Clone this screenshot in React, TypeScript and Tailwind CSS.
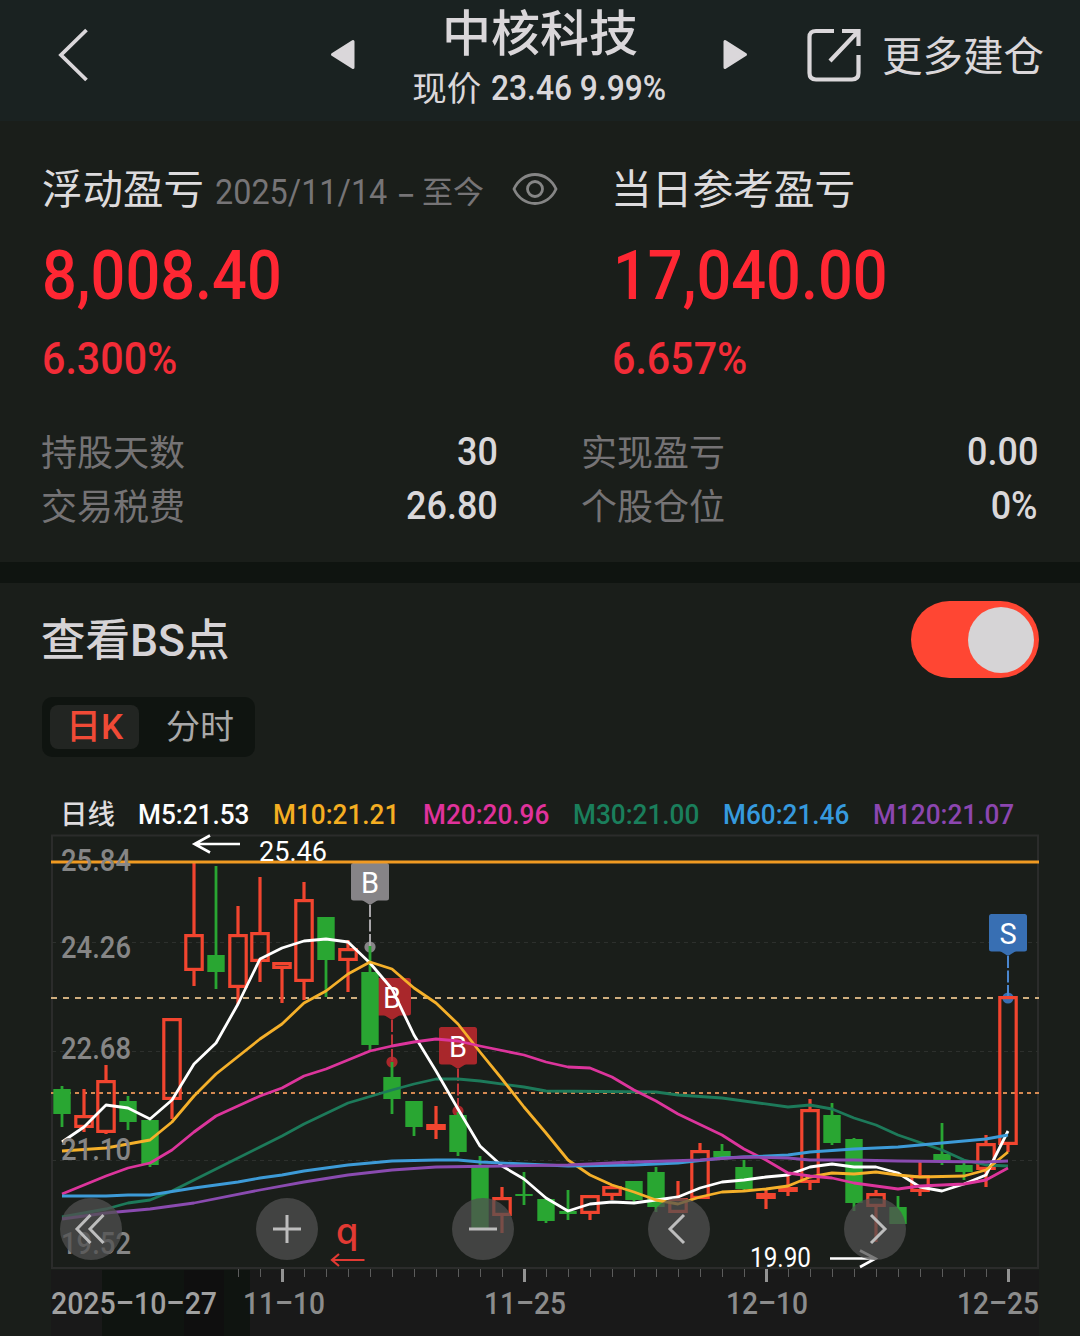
import type { ReactNode } from "react";

type Candle = [high: number, top: number, bottom: number, low: number, kind: "u" | "d"];

const STEP = 22;
const FIRST_X = 62;

const candles: Candle[] = [
  [1086, 1089, 1114, 1127, "d"],
  [1089, 1115, 1128, 1132, "u"],
  [1065, 1080, 1133, 1134, "u"],
  [1096, 1101, 1122, 1130, "d"],
  [1120, 1120, 1165, 1167, "d"],
  [1018, 1018, 1100, 1119, "u"],
  [862, 934, 971, 986, "u"],
  [866, 955, 972, 989, "d"],
  [906, 934, 988, 1004, "u"],
  [877, 932, 962, 982, "u"],
  [962, 962, 969, 1003, "u"],
  [882, 899, 982, 1000, "u"],
  [917, 917, 960, 997, "d"],
  [940, 948, 961, 992, "u"],
  [946, 972, 1045, 1051, "d"],
  [1062, 1077, 1099, 1114, "d"],
  [1101, 1101, 1127, 1136, "d"],
  [1106, 1124, 1130, 1139, "u"],
  [1112, 1115, 1152, 1156, "d"],
  [1156, 1167, 1229, 1229, "d"],
  [1187, 1197, 1216, 1233, "u"],
  [1172, 1194, 1196, 1205, "d"],
  [1199, 1199, 1221, 1223, "d"],
  [1190, 1211, 1214, 1220, "d"],
  [1195, 1195, 1214, 1220, "u"],
  [1185, 1186, 1196, 1200, "u"],
  [1181, 1181, 1200, 1202, "d"],
  [1167, 1172, 1207, 1212, "d"],
  [1181, 1198, 1213, 1213, "u"],
  [1143, 1150, 1199, 1199, "u"],
  [1144, 1151, 1157, 1160, "d"],
  [1160, 1167, 1189, 1190, "d"],
  [1190, 1193, 1199, 1209, "u"],
  [1176, 1187, 1192, 1196, "u"],
  [1099, 1109, 1183, 1190, "u"],
  [1103, 1115, 1143, 1145, "d"],
  [1138, 1139, 1203, 1211, "d"],
  [1190, 1193, 1207, 1242, "u"],
  [1196, 1207, 1224, 1224, "d"],
  [1162, 1175, 1192, 1196, "u"],
  [1123, 1154, 1160, 1165, "d"],
  [1163, 1165, 1172, 1180, "d"],
  [1135, 1143, 1170, 1187, "u"],
  [996, 996, 1145, 1152, "u"],
];

const lines = [
  {
    color: "#1d7a5a",
    points:
      "62,1217 106,1209 128,1203 150,1200 172,1191 194,1180 216,1169 260,1147 282,1136 304,1124 348,1103 392,1090 414,1084 436,1079 458,1079 480,1081 524,1087 546,1091 656,1092 678,1095 722,1098 788,1107 810,1105 832,1109 854,1118 876,1125 898,1135 942,1150 964,1160 986,1165 1008,1166",
  },
  {
    color: "#ffffff",
    points:
      "62,1142 84,1127 106,1105 128,1108 150,1119 172,1100 194,1064 216,1043 238,1004 260,959 282,948 304,941 326,939 348,942 370,963 392,989 414,1035 436,1071 458,1109 480,1146 502,1166 524,1179 546,1198 568,1211 590,1204 612,1202 634,1203 656,1200 678,1197 700,1188 722,1182 744,1180 766,1177 788,1175 810,1167 832,1164 854,1167 876,1167 898,1173 920,1187 942,1191 964,1184 986,1175 1008,1131",
  },
  {
    color: "#f5b02a",
    points:
      "62,1151 106,1148 150,1140 172,1122 194,1096 216,1074 260,1039 282,1024 304,1003 326,991 348,974 370,962 392,969 414,988 436,1003 458,1024 480,1052 502,1079 524,1107 546,1133 568,1160 590,1175 612,1185 634,1192 656,1200 678,1204 700,1197 722,1192 744,1191 766,1189 788,1186 810,1177 832,1173 854,1174 876,1172 898,1175 920,1177 964,1176 986,1170 1008,1152",
  },
  {
    color: "#dc359c",
    points:
      "62,1194 106,1176 128,1168 150,1163 172,1150 194,1132 216,1116 260,1096 282,1088 304,1076 326,1069 348,1060 370,1051 392,1046 414,1042 436,1039 458,1041 480,1046 524,1055 546,1062 568,1067 590,1068 612,1077 634,1090 656,1101 678,1114 722,1135 744,1149 766,1160 788,1173 810,1176 832,1178 854,1183 898,1189 920,1186 964,1184 986,1180 1008,1168",
  },
  {
    color: "#3d9bd8",
    points:
      "62,1196 106,1196 128,1195 150,1195 194,1188 238,1182 260,1178 282,1175 304,1171 348,1165 392,1161 436,1160 458,1160 480,1162 524,1164 568,1166 634,1165 678,1163 722,1158 744,1157 788,1155 810,1152 854,1149 898,1147 942,1143 986,1139 1008,1135",
  },
  {
    color: "#8a4bb0",
    points:
      "62,1219 106,1213 150,1209 194,1203 260,1190 304,1182 348,1175 392,1170 436,1167 502,1166 568,1165 634,1162 700,1160 744,1157 788,1158 810,1160 854,1160 898,1161 986,1162 1008,1161",
  },
];

const markers = [
  { x: 370, y: 863, dot: 947, label: "B", fill: "#868487", line: "#a9a7aa" },
  { x: 392, y: 978, dot: 1062, label: "B", fill: "#a9272b", line: "#bb3437" },
  { x: 458, y: 1027, dot: 1111, label: "B", fill: "#a9272b", line: "#bb3437" },
  { x: 1008, y: 914, dot: 998, label: "S", fill: "#386fb3", line: "#4a86cf" },
];

const priceLabels = [
  { text: "25.84", y: 871 },
  { text: "24.26", y: 958 },
  { text: "22.68", y: 1059 },
  { text: "21.10", y: 1160 },
  { text: "19.52", y: 1254 },
];

const dateLabels = [
  { text: "2025–10–27", x: 51, width: 166, color: "#a0a0a0" },
  { text: "11–10", x: 243, width: 82, color: "#8c8c8c" },
  { text: "11–25", x: 484, width: 82, color: "#8c8c8c" },
  { text: "12–10", x: 726, width: 82, color: "#8c8c8c" },
  { text: "12–25", x: 957, width: 82, color: "#8c8c8c" },
];

function CandleShape({ x, data }: { x: number; data: Candle }) {
  const [high, top, bottom, low, kind] = data;
  if (kind === "d") {
    return (
      <g fill="#29a632">
        <rect x={x - 1.4} y={high} width={2.8} height={low - high} />
        <rect x={x - 8.7} y={top} width={17.4} height={bottom - top} />
      </g>
    );
  }
  return (
    <g stroke="#f2452f" strokeWidth={3.2} fill="none">
      <path d={`M${x} ${high}V${top + 1}M${x} ${bottom - 1}V${low}`} />
      <rect x={x - 8.2} y={top + 1.6} width={16.4} height={Math.max(bottom - top - 3.2, 1)} />
    </g>
  );
}

function Chart() {
  return (
    <svg viewBox="0 834 1080 502" className="block h-[502px] w-full" fontFamily='Roboto, "Noto Sans", sans-serif'>
      {/* date axis background */}
      <rect x="51" y="1270" width="988" height="66" fill="#191919" />
      <rect x="102" y="1270" width="148" height="66" fill="#0f1410" />
      <rect x="184" y="1270" width="40" height="66" fill="#0f0f0f" />

      <rect x="52" y="835.5" width="986" height="432.5" fill="none" stroke="#2b2c2b" strokeWidth="2" />
      <path d="M52 942.5H1038M52 1051.5H1038M52 1160.5H1038" stroke="#2d302d" strokeWidth="1.2" strokeDasharray="4 4" />
      <path d="M51 998H1039" stroke="#cfae7e" strokeWidth="2" strokeDasharray="6 6" />
      <path d="M51 1093H1039" stroke="#d58a52" strokeWidth="2" strokeDasharray="4 4" />

      {markers.map((m) => (
        <g key={m.x}>
          <circle cx={m.x} cy={m.dot} r="5.6" fill={m.fill} />
          <path d={`M${m.x} ${m.y + 42}V${m.dot}`} stroke={m.line} strokeWidth="2" strokeDasharray="12 2.500" />
          <rect x={m.x - 19} y={m.y} width="38" height="37.5" rx="2.5" fill={m.fill} />
          <path d={`M${m.x - 8} ${m.y + 37}h16l-8 5z`} fill={m.fill} />
        </g>
      ))}

      {candles.map((c, i) => (
        <CandleShape key={i} x={FIRST_X + i * STEP} data={c} />
      ))}

      {markers.map((m) => (
        <text key={m.x} x={m.x} y={m.y + 29.5} fontSize="29" fill="#fff" textAnchor="middle">
          {m.label}
        </text>
      ))}

      {lines.map((l) => (
        <polyline key={l.color} points={l.points} fill="none" stroke={l.color} strokeWidth="2.8" strokeLinejoin="round" />
      ))}

      <path d="M51 862H1039" stroke="#f09a22" strokeWidth="3" />

      {priceLabels.map((p) => (
        <text key={p.text} x="61" y={p.y} fontSize="31" fontWeight="500" fill="#868686" textLength="70" lengthAdjust="spacingAndGlyphs">
          {p.text}
        </text>
      ))}

      {/* high / low callouts */}
      <g fill="none" stroke="#fff" strokeWidth="2.6">
        <path d="M240 844H195M210 835.5L194.5 844L210 852.5" />
        <path d="M830 1258.5H875M860 1250.5L875.5 1258.5L860 1267" />
      </g>
      <text x="259" y="861" fontSize="27.5" fill="#fff" textLength="68" lengthAdjust="spacingAndGlyphs">25.46</text>
      <text x="750" y="1267" fontSize="27.5" fill="#fff" textLength="61" lengthAdjust="spacingAndGlyphs">19.90</text>

      <text x="336" y="1244" fontSize="36" fontFamily="Inter" fontWeight="500" fill="#e23a33">q</text>
      <path d="M364.500 1260H332M339 1254L332 1260L339 1266" fill="none" stroke="#e23a33" strokeWidth="2.2" />

      {/* axis ticks, one for each trading day from 11-06 */}
      {candles.slice(8).map((_, i) => {
        const major = i % 11 === 2;
        return (
          <rect
            key={i}
            x={238 + i * STEP - (major ? 1 : 0)}
            y="1269"
            width={major ? 3 : 1}
            height={major ? 13 : 8}
            fill={major ? "#929292" : "#5c5c5c"}
          />
        );
      })}

      {dateLabels.map((d) => (
        <text key={d.x} x={d.x} y="1314" fontSize="31" fontWeight="500" fill={d.color} textLength={d.width} lengthAdjust="spacingAndGlyphs">
          {d.text}
        </text>
      ))}
    </svg>
  );
}

function RoundButton({ children }: { children: ReactNode }) {
  return (
    <button className="flex size-[62px] items-center justify-center rounded-full bg-[#505050]/75">
      <svg viewBox="0 0 62 62" className="size-full" fill="none" stroke="#bdbdbd" strokeWidth="3">
        {children}
      </svg>
    </button>
  );
}

function Stat({ label, value }: { label: string; value: string }) {
  return (
    <div className="flex h-[54px] items-center justify-between leading-[54px]">
      <span className="-ml-px pt-[4px] text-[36px] text-[#757375]">{label}</span>
      <span className="origin-right scale-x-[0.91] text-[39.500px] font-medium text-[#dad8da]">{value}</span>
    </div>
  );
}

function Header() {
  return (
    <header className="flex h-[121px] bg-[#1a2221] text-[#dad7da]">
      <button className="ml-[57px] mt-[27px] h-[56px] w-[34px]">
        <svg viewBox="0 0 34 56" className="size-full" fill="none" stroke="currentColor" strokeWidth="3.8">
          <path d="M29.500 3L4 28L29.500 53" />
        </svg>
      </button>
      <button className="ml-[239px] mt-[39px] h-[32px] w-[26px]">
        <svg viewBox="0 0 26 32" className="size-full" fill="currentColor" stroke="currentColor" strokeWidth="3" strokeLinejoin="round">
          <path d="M2.500 15.500L23 2.500V28.500Z" />
        </svg>
      </button>
      <div className="ml-[37px] flex w-[294px] flex-col items-center whitespace-nowrap">
        <h1 className="mt-[6px] h-[58px] text-[49px] font-medium leading-[57px]">中核科技</h1>
        <p className="flex h-[48px] items-center text-[34.500px] leading-[48px]">
          <span className="pt-px">现价</span>
          <span className="-mr-[14px] ml-[10px] origin-left scale-x-[0.92] font-medium">23.46 9.99%</span>
        </p>
      </div>
      <button className="ml-[35px] mt-[39px] h-[32px] w-[26px] shrink-0">
        <svg viewBox="0 0 26 32" className="size-full" fill="currentColor" stroke="currentColor" strokeWidth="3" strokeLinejoin="round">
          <path d="M23.500 15.500L3 2.500V28.500Z" />
        </svg>
      </button>
      <button className="ml-[58px] flex h-[110px] shrink-0 items-center gap-[20px]">
        <svg viewBox="0 0 56 56" className="size-[56px]" fill="none" stroke="currentColor" strokeWidth="4.200">
          <path d="M28 4H10Q3.500 4 3.500 10V46Q3.500 52.500 10 52.500H46Q52.500 52.500 52.500 46V28" />
          <path d="M36 4H52.500V19M52 4.500L24 34" />
        </svg>
        <span className="whitespace-nowrap pt-[5px] text-[40.500px]">更多建仓</span>
      </button>
    </header>
  );
}

export default function App() {
  return (
    <div className="h-[1336px] w-[1080px] overflow-hidden bg-[#1a1e1a] font-[Roboto,'Noto_Sans_CJK_SC',sans-serif]">
      <Header />

      <section className="h-[441px] pt-[43px]">
        <div className="flex pl-[42px]">
          <div className="w-[571px]">
            <div className="flex h-[50px] items-center whitespace-nowrap leading-[50px]">
              <span className="pt-px text-[40.500px] text-[#dddbdd]">浮动盈亏</span>
              <span className="ml-[11px] mt-[8px] flex w-[270px] text-[35px] text-[#767476]">
                <span className="w-[181px] origin-left scale-x-[0.925]">2025/11/14</span>
                <span className="w-[26px] origin-left scale-x-125 font-[Inter]">-</span>
                <span className="text-[31px]">至今</span>
              </span>
              <svg viewBox="0 0 46 34" className="ml-[27px] h-[34px] w-[46px]" fill="none" stroke="#858585" strokeWidth="2.800">
                <path d="M2 17C6 8 14 2.500 23 2.500S40 8 44 17C40 26 32 31.500 23 31.500S6 26 2 17Z" />
                <circle cx="23" cy="17" r="7.500" />
              </svg>
            </div>
            <p className="mt-[22px] h-[80px] w-max origin-left scale-x-[0.895] text-[68.500px] font-medium leading-[80px] text-[#ff2733]">
              8,008.40
            </p>
            <p className="mt-[18px] h-[50px] w-max origin-left scale-x-[0.915] text-[45px] font-medium leading-[50px] text-[#f22c37]">
              6.300%
            </p>
          </div>
          <div>
            <p className="-ml-[2px] h-[50px] pt-px text-[40.700px] leading-[50px] text-[#dddbdd]">当日参考盈亏</p>
            <p className="mt-[22px] h-[80px] w-max origin-left scale-x-[0.895] text-[68.500px] font-medium leading-[80px] text-[#ff2733]">
              17,040.00
            </p>
            <p className="-ml-px mt-[18px] h-[50px] w-max origin-left scale-x-[0.915] text-[45px] font-medium leading-[50px] text-[#f22c37]">
              6.657%
            </p>
          </div>
        </div>
        <div className="mt-[41px] grid grid-cols-2 gap-x-[84px] pl-[42px] pr-[42px]">
          <Stat label="持股天数" value="30" />
          <Stat label="实现盈亏" value="0.00" />
          <Stat label="交易税费" value="26.80" />
          <Stat label="个股仓位" value="0%" />
        </div>
      </section>

      <div className="h-[21px] bg-[#0f1410]" />

      <section className="pt-[18px]">
        <div className="flex h-[77px] items-center justify-between pl-[41px] pr-[41px]">
          <h2 className="pt-[3px] text-[44.500px] font-medium text-[#d6d3d6]">查看BS点</h2>
          <button className="flex h-[77px] w-[128px] items-center justify-end rounded-full bg-[#ff4633] pr-[5px]">
            <span className="size-[66px] rounded-full bg-[#d6d4d6]" />
          </button>
        </div>

        <div className="ml-[42px] mt-[19px] flex h-[60px] w-[213px] items-center rounded-[10px] bg-[#0f1410] p-[8px] text-[34px]">
          <button className="h-[44px] w-[89px] rounded-[8px] bg-[#222522] text-[35px] font-medium leading-[46px] text-[#f04a36]">日K</button>
          <button className="ml-[14px] w-[94px] leading-[47px] text-[#a9a9a9]">分时</button>
        </div>

        <div className="mt-[37px] flex h-[40px] whitespace-nowrap pl-[60px] text-[28px] font-medium leading-[41px]">
          <span className="w-[78px] text-[27.500px] leading-[42px] text-[#dedcde]">日线</span>
          <span className="w-[135px] origin-left scale-x-[0.935] text-white">M5:21.53</span>
          <span className="w-[150px] origin-left scale-x-[0.935] text-[#f5ae22]">M10:21.21</span>
          <span className="w-[150px] origin-left scale-x-[0.935] text-[#e0329c]">M20:20.96</span>
          <span className="w-[150px] origin-left scale-x-[0.935] text-[#1a7f5c]">M30:21.00</span>
          <span className="w-[150px] origin-left scale-x-[0.935] text-[#369ade]">M60:21.46</span>
          <span className="w-[150px] origin-left scale-x-[0.935] text-[#8c46b0]">M120:21.07</span>
        </div>

        <div className="relative">
          <Chart />
          {/* chart controls float over the candles */}
          <div className="absolute left-[60px] top-[364px] flex gap-[134px]">
            <RoundButton>
              <path d="M30.500 17L17 31L30.500 45M43.500 17L30 31L43.500 45" />
            </RoundButton>
            <RoundButton>
              <path d="M31 17V45M17 31H45" />
            </RoundButton>
            <RoundButton>
              <path d="M17 31H45" />
            </RoundButton>
            <RoundButton>
              <path d="M36 17L22 31L36 45" />
            </RoundButton>
            <RoundButton>
              <path d="M27 17L41 31L27 45" />
            </RoundButton>
          </div>
        </div>
      </section>
    </div>
  );
}
